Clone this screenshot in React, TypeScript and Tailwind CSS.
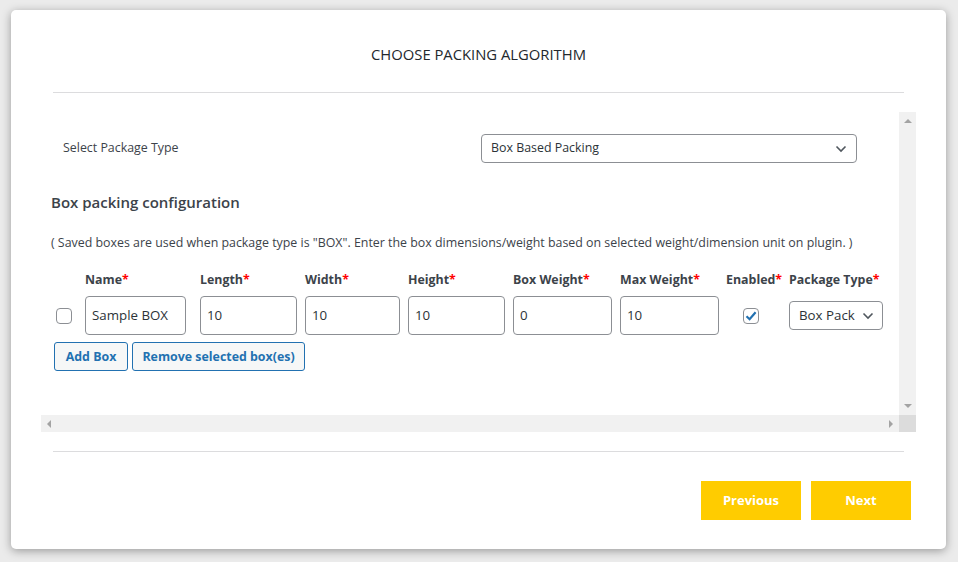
import React from "react";

const font = { fontFamily: '"Open Sans", "Noto Sans", Arial, sans-serif' };

function Chevron() {
  return (
    <svg width="12" height="8" viewBox="0 0 12 8" fill="none">
      <path d="M1.5 1.5 L6 6 L10.5 1.5" stroke="#50575e" strokeWidth="1.6" />
    </svg>
  );
}

function Label({ text }: { text: string }) {
  return (
    <span className="font-bold text-[12.4px] text-[#3c434a] whitespace-nowrap">
      {text}
      <span className="text-[#ff0000]">*</span>
    </span>
  );
}

function TextInput({ value, w }: { value: string; w: string }) {
  return (
    <div
      className={`${w} h-[39px] border border-[#8c8f94] rounded-[4px] bg-white flex items-center px-[6px] text-[13.3px] text-[#2c3338]`}
    >
      {value}
    </div>
  );
}

export default function App() {
  const cols: { label: string; w: string; input?: { value: string; w: string } }[] = [
    { label: "Name", w: "w-[115px]", input: { value: "Sample BOX", w: "w-[101px]" } },
    { label: "Length", w: "w-[105px]", input: { value: "10", w: "w-[97px]" } },
    { label: "Width", w: "w-[103px]", input: { value: "10", w: "w-[95px]" } },
    { label: "Height", w: "w-[105px]", input: { value: "10", w: "w-[97px]" } },
    { label: "Box Weight", w: "w-[107px]", input: { value: "0", w: "w-[99px]" } },
    { label: "Max Weight", w: "w-[106px]", input: { value: "10", w: "w-[99px]" } },
  ];
  return (
    <div className="w-[958px] h-[562px] bg-[#ebebeb] pt-[10px] pl-[11px]" style={font}>
      <div className="w-[935px] h-[539px] bg-white rounded-[5px] shadow-[0_2px_10px_rgba(0,0,0,0.35)] flex flex-col">
        <div className="pt-[34px] h-[54px] text-center text-[14.8px] leading-[20px] text-[#23282d]">
          CHOOSE PACKING ALGORITHM
        </div>
        <div className="mt-[28px] mx-[42px] h-px bg-[#dcdcde]" />
        <div className="mt-[19px] ml-[30px] w-[875px] h-[320px] flex flex-col">
          <div className="flex h-[303px]">
            <div className="w-[858px] h-[303px] overflow-hidden pt-[22px]">
              <div className="flex items-center h-[29px]">
                <span className="ml-[22px] w-[418px] text-[12.4px] text-[#3c434a]">Select Package Type</span>
                <div className="w-[376px] h-[29px] border border-[#8c8f94] rounded-[4px] flex items-center justify-between pl-[9px] pr-[9px] text-[12.4px] text-[#2c3338]">
                  <span>Box Based Packing</span>
                  <Chevron />
                </div>
              </div>
              <div className="mt-[28px] ml-[10px] h-[22px] leading-[22px] text-[15px] font-semibold text-[#3c434a]">
                Box packing configuration
              </div>
              <div className="mt-[21px] ml-[10px] h-[18px] leading-[18px] text-[12.4px] text-[#3c434a] whitespace-nowrap">
                ( Saved boxes are used when package type is "BOX". Enter the box dimensions/weight based on selected weight/dimension unit on plugin. )
              </div>
              <div className="mt-[17px] flex h-[18px] leading-[18px]">
                <div className="w-[44px]" />
                {cols.map((c) => (
                  <div key={c.label} className={c.w}>
                    <Label text={c.label} />
                  </div>
                ))}
                <div className="w-[63px]">
                  <Label text="Enabled" />
                </div>
                <div>
                  <Label text="Package Type" />
                </div>
              </div>
              <div className="mt-[9px] flex items-center h-[39px]">
                <div className="w-[44px] pl-[15px] flex items-center">
                  <div className="w-[16px] h-[16px] border border-[#8c8f94] rounded-[4px] bg-white" />
                </div>
                {cols.map((c) => (
                  <div key={c.label} className={c.w}>
                    <TextInput value={c.input!.value} w={c.input!.w} />
                  </div>
                ))}
                <div className="w-[63px] pl-[17px] flex items-center">
                  <div className="w-[16px] h-[16px] border border-[#8c8f94] rounded-[4px] bg-white flex items-center justify-center">
                    <svg width="14" height="14" viewBox="0 0 14 14" fill="none">
                      <path d="M2.5 7.2 L5.6 10.2 L11.6 3.2" stroke="#2271b1" strokeWidth="2.2" />
                    </svg>
                  </div>
                </div>
                <div className="w-[94px] h-[29px] border border-[#8c8f94] rounded-[4px] flex items-center justify-between pl-[9px] pr-[8px] text-[13.3px] text-[#2c3338]">
                  <span>Box Pack</span>
                  <Chevron />
                </div>
              </div>
              <div className="mt-[7px] ml-[13px] flex gap-[4px]">
                <div className="w-[74px] h-[29px] border border-[#2271b1] rounded-[3px] bg-[#f6f7f7] text-[#2271b1] text-[12.4px] font-bold flex items-center justify-center pt-[1px]">
                  Add Box
                </div>
                <div className="w-[173px] h-[29px] border border-[#2271b1] rounded-[3px] bg-[#f6f7f7] text-[#2271b1] text-[12.4px] font-bold flex items-center justify-center pt-[1px]">
                  Remove selected box(es)
                </div>
              </div>
            </div>
            <div className="w-[17px] h-[303px] bg-[#f1f1f1] flex flex-col items-center justify-between py-[7px]">
              <svg width="8" height="4" viewBox="0 0 8 4"><path d="M0 4 L4 0 L8 4 Z" fill="#a3a3a3" /></svg>
              <svg width="8" height="4" viewBox="0 0 8 4"><path d="M0 0 L4 4 L8 0 Z" fill="#a3a3a3" /></svg>
            </div>
          </div>
          <div className="flex h-[17px]">
            <div className="w-[858px] h-[17px] bg-[#f1f1f1] flex items-center justify-between px-[6px]">
              <svg width="4" height="8" viewBox="0 0 4 8"><path d="M4 0 L0 4 L4 8 Z" fill="#a3a3a3" /></svg>
              <svg width="4" height="8" viewBox="0 0 4 8"><path d="M0 0 L4 4 L0 8 Z" fill="#a3a3a3" /></svg>
            </div>
            <div className="w-[17px] h-[17px] bg-[#dcdcdc]" />
          </div>
        </div>
        <div className="mt-[19px] mx-[42px] h-px bg-[#dcdcde]" />
        <div className="mt-[29px] flex justify-end gap-[10px] pr-[35px]">
          <div className="w-[100px] h-[39px] bg-[#ffcc00] text-white font-bold text-[13px] flex items-center justify-center pt-[1px]">
            Previous
          </div>
          <div className="w-[100px] h-[39px] bg-[#ffcc00] text-white font-bold text-[13px] flex items-center justify-center pt-[1px]">
            Next
          </div>
        </div>
      </div>
    </div>
  );
}
